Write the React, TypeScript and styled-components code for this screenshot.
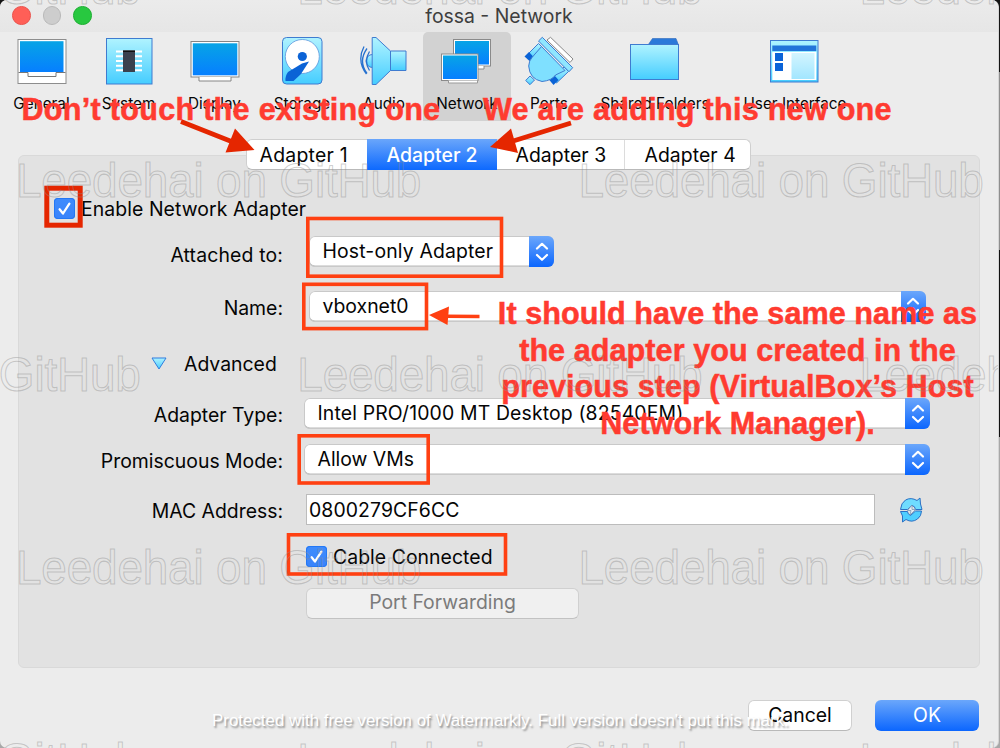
import React from "react";
import styled, { createGlobalStyle, css } from "styled-components";

const Global = createGlobalStyle`
  html, body { margin: 0; padding: 0; overflow: hidden; }
  body {
    width: 1000px; height: 748px;
    background: linear-gradient(#141414 0 72px, #8f8f8f 72px 250px, #111 250px 437px, #a8a8a8 437px);
    font-family: Inter, "Liberation Sans", sans-serif;
  }
`;

const Window = styled.main`
  position: relative;
  display: flex;
  flex-direction: column;
  box-sizing: border-box;
  width: 999px;
  height: 748px;
  overflow: hidden;
  background: #ececec;
  border-radius: 7px;
  border-right: 1px solid #d6d6d6;
  font-size: 19.4px;
  color: #050505;
  white-space: nowrap;
`;

const TitleBar = styled.header`
  position: relative;
  display: flex;
  align-items: center;
  justify-content: center;
  height: 32px;
  flex: none;
  box-sizing: border-box;
  background: linear-gradient(#ebebeb, #e6e6e6);
  color: #3e3e3e;
`;

const Lights = styled.div`
  position: absolute;
  left: 12px;
  top: 6px;
  display: flex;
  gap: 12px;
`;

const Light = styled.span<{ $fill: string; $edge: string }>`
  box-sizing: border-box;
  width: 18.7px;
  height: 18.7px;
  border-radius: 50%;
  background: ${(p) => p.$fill};
  border: 1px solid ${(p) => p.$edge};
`;

const Toolbar = styled.nav`
  display: flex;
  height: 89px;
  flex: none;
`;

const Tool = styled.div<{ $w: number; $gap?: number; $active?: boolean }>`
  display: flex;
  flex-direction: column;
  align-items: center;
  width: ${(p) => p.$w}px;
  margin-right: ${(p) => p.$gap ?? 0}px;
  box-sizing: border-box;
  padding-top: 4px;
  border-radius: 5px 5px 0 0;
  background: ${(p) => (p.$active ? "#d2d2d2" : "transparent")};
  font-size: 15.3px;
  line-height: 20px;
  svg { display: block; flex: none; margin-bottom: 6px; }
`;

const Body = styled.section`
  position: relative;
  box-sizing: border-box;
  height: 547px;
  flex: none;
  padding: 34px 18px 0;
`;

const Panel = styled.div`
  box-sizing: border-box;
  width: 962px;
  height: 513px;
  padding-top: 38px;
  border: 1px solid #d9d9d9;
  border-radius: 6px;
  background: #e2e2e2;
`;

const Tabs = styled.div`
  position: absolute;
  left: 246px;
  top: 18px;
  display: flex;
  width: 505px;
  height: 31px;
  box-sizing: border-box;
  border: 1px solid #cfcfcf;
  border-bottom-color: #b9b9b9;
  border-radius: 6px;
  background: #fff;
`;

const Tab = styled.div<{ $w: number; $pad: number; $active?: boolean; $line?: boolean; $space?: number }>`
  width: ${(p) => p.$w}px;
  box-sizing: border-box;
  padding-left: ${(p) => p.$pad}px;
  line-height: 30px;
  letter-spacing: ${(p) => p.$space ?? 0.25}px;
  ${(p) => p.$line && css`border-right: 1px solid #dcdcdc;`}
  ${(p) =>
    p.$active &&
    css`
      margin: -1px 0;
      line-height: 32px;
      color: #fff;
      font-weight: 500;
      background: linear-gradient(#6aa6fb, #0d69fe);
    `}
`;

const Row = styled.div<{ $gap?: number; $h?: number }>`
  display: flex;
  align-items: center;
  height: ${(p) => p.$h ?? 31}px;
  margin-top: ${(p) => p.$gap ?? 0}px;
`;

const Label = styled.label<{ $drop?: number; $space?: number }>`
  width: 264px;
  flex: none;
  text-align: right;
  line-height: 26px;
  letter-spacing: ${(p) => p.$space ?? 0}px;
  padding-top: ${(p) => p.$drop ?? 0}px;
`;

const Select = styled.div<{ $w: number; $x: number }>`
  display: flex;
  justify-content: space-between;
  box-sizing: border-box;
  width: ${(p) => p.$w}px;
  height: 31px;
  margin-left: ${(p) => p.$x}px;
  padding-left: 13.5px;
  border-radius: 6px;
  background: #fff;
  box-shadow: inset 0 0 0 1px #c9c9c9, inset 0 -1.5px 0 #b9b9b9;
  line-height: 31px;
`;

const Stepper = styled.span`
  display: flex;
  align-items: center;
  justify-content: center;
  width: 25px;
  height: 31px;
  border-radius: 0 6px 6px 0;
  background: linear-gradient(#6ba7fb, #0b66fe);
`;

const Spaced = styled.span<{ $s: number }>`
  letter-spacing: ${(p) => p.$s}px;
`;

const Check = styled.span<{ $x: number; $gap: number; $lift?: number }>`
  display: flex;
  width: 21px;
  height: 21px;
  margin-left: ${(p) => p.$x}px;
  margin-right: ${(p) => p.$gap}px;
  margin-bottom: ${(p) => p.$lift ?? 0}px;
  border-radius: 4px;
  background: linear-gradient(#3f8cfd, #3983fb);
  box-shadow: inset 0 0 0 1px #2478f5;
`;

const Advanced = styled.div`
  display: flex;
  align-items: center;
  gap: 17px;
  margin-left: 132px;
`;

const Field = styled.div`
  box-sizing: border-box;
  width: 569px;
  height: 31px;
  margin-left: 23px;
  margin-right: 24px;
  padding-left: 2px;
  border: 1px solid #bcbcbc;
  background: #fff;
  line-height: 30px;
  letter-spacing: 0.1px;
`;

const Button = styled.div<{ $w: number; $kind?: "primary" | "disabled" }>`
  display: flex;
  align-items: center;
  justify-content: center;
  box-sizing: border-box;
  width: ${(p) => p.$w}px;
  height: 31px;
  border-radius: 6px;
  background: #fff;
  border: 1px solid #d0d0d0;
  border-bottom-color: #b9b9b9;
  line-height: 27px;
  ${(p) =>
    p.$kind === "disabled" &&
    css`
      margin-left: 23px;
      padding-bottom: 2px;
      color: #7b7b7b;
      background: #f0f0f0;
      border-color: #d0d0d0;
      border-bottom-color: #c2c2c2;
    `}
  ${(p) =>
    p.$kind === "primary" &&
    css`
      color: #fff;
      border: 0;
      background: linear-gradient(#6ba7fb, #0b66fe);
    `}
`;

const Footer = styled.footer`
  display: flex;
  justify-content: flex-end;
  gap: 23px;
  padding: 32px 19px 0 0;
`;

const Overlay = styled.div`
  position: absolute;
  inset: 0;
  pointer-events: none;
`;

const Marks = styled.svg`
  position: absolute;
  left: 0;
  top: 0;
`;

const Note = styled.p<{ $x: number; $y: number; $w?: number; $s?: number }>`
  position: absolute;
  left: ${(p) => p.$x}px;
  top: ${(p) => p.$y}px;
  width: ${(p) => (p.$w ? p.$w + "px" : "auto")};
  margin: 0;
  text-align: center;
  white-space: pre;
  color: #ff3b30;
  font: bold 30.6px/36.7px "Liberation Sans", Arial, sans-serif;
  letter-spacing: ${(p) => p.$s ?? 0}px;
  -webkit-text-stroke: 0.5px #ff3b30;
`;

const Stamp = styled.span<{ $x: number; $base: number }>`
  position: absolute;
  left: ${(p) => p.$x}px;
  top: ${(p) => p.$base - 41.5}px;
  font: 45.9px/52px "Liberation Sans", Arial, sans-serif;
  letter-spacing: -0.17px;
  transform: scaleY(1.04);
  transform-origin: 0 42px;
  color: transparent;
  -webkit-text-stroke: 1px rgba(140, 140, 140, 0.42);
`;

const Notice = styled.p`
  position: absolute;
  left: 212px;
  top: 711px;
  margin: 0;
  color: #fff;
  font: 16.9px/20px "Liberation Sans", Arial, sans-serif;
  text-shadow: 1.5px 2px 2px rgba(0, 0, 0, 0.4);
`;

const Arrows = () => (
  <Stepper>
    <svg width="14" height="20" viewBox="0 0 14 20" fill="none" stroke="#fff" strokeWidth="2.2" strokeLinecap="round" strokeLinejoin="round">
      <path d="M2 6.5 L7 1.800 L12 6.5 M2 13 L7 17.800 L12 13" />
    </svg>
  </Stepper>
);

const Tick = () => (
  <svg width="21" height="21" viewBox="0 0 21 21" fill="none" stroke="#fff" strokeWidth="2.3" strokeLinecap="round" strokeLinejoin="round">
    <path d="M5.6 11.3 L9 15.5 L15.4 5.6" />
  </svg>
);

const Icon = ({ cx, children }: { cx: number; children: React.ReactNode }) => (
  <svg width="52" height="52" viewBox={`${cx - 26} 36 52 52`}>
    {children}
  </svg>
);

const SCREEN = "url(#screen)";
const ICE = "url(#ice)";
const EDGE = "#3f7bd0";

const tools = [
  { name: "General", w: 83, cx: 41.5, art: (
    <>
      <rect x="17.5" y="39.5" width="48" height="44" fill="#fff" stroke="#8d8d8d" />
      <path d="M18 72.5H27.5V76.5H55.5V72.5H65" fill="#fff" stroke="#777" />
      <rect x="19.5" y="41.2" width="43.5" height="30.8" fill={SCREEN} />
    </>
  ) },
  { name: "System", w: 91, cx: 129, art: (
    <>
      <rect x="106.5" y="38.5" width="45.5" height="45.5" fill={ICE} stroke={EDGE} />
      <path d="M116 51.5h26M116 56.2h26M116 61h26M116 65.7h26M116 70.3h26" stroke="#fff" strokeWidth="2" />
      <rect x="123" y="50.5" width="12" height="21.5" fill="#3a414e" />
      <rect x="123" y="50.5" width="12" height="1.5" fill="#111" />
    </>
  ) },
  { name: "Display", w: 81, cx: 214.5, art: (
    <>
      <rect x="190.5" y="41.5" width="48" height="35.5" fill="#fff" stroke="#858585" />
      <path d="M198.5 77v4h32v-4" fill="#fff" stroke="#858585" />
      <rect x="192.3" y="43.3" width="44.5" height="32" fill={SCREEN} />
    </>
  ) },
  { name: "Storage", w: 94, cx: 302, art: (
    <>
      <rect x="282.5" y="37.5" width="39.5" height="46.5" rx="4" fill={ICE} stroke={EDGE} />
      <circle cx="302.3" cy="56.5" r="17" fill="#fff" stroke="#5b96dc" strokeWidth="0.8" />
      <circle cx="302.3" cy="56.5" r="4.6" fill="#0b63d6" />
      <path d="M309 61.5 L302 63.5 L288 72 Q285 76 285.5 81 L293.5 81 L301 74 Z" fill="#0b63d6" />
    </>
  ) },
  { name: "Audio", w: 70, gap: 4, cx: 383.5, art: (
    <>
      <path d="M372 54.5a6.500 6.500 0 0 0 0 13" fill={ICE} stroke={EDGE} />
      <path d="M369 51.5q-6 9.500 0 19M366.500 48.500q-9 12.500 0 25M363.500 46.500q-7.500 14.500 2.500 27.500" fill="none" stroke="#2671cf" strokeWidth="1.3" />
      <path d="M390 51H405.500V70.500H390Z" fill={ICE} stroke={EDGE} />
      <path d="M371.700 37.500H375.500L390 51V70.500L375.500 84.500H371.700Z" fill={ICE} stroke={EDGE} />
    </>
  ) },
  { name: "Network", w: 88, active: true, cx: 467, art: (
    <>
      <rect x="453.500" y="39.500" width="37" height="26.500" fill="#fff" stroke="#8a8a8a" />
      <path d="M470 66v3h14v-3" fill="#fff" stroke="#8a8a8a" />
      <rect x="455" y="41" width="34" height="23.500" fill={SCREEN} />
      <rect x="441.500" y="54" width="36.500" height="26.500" fill="#fff" stroke="#8a8a8a" />
      <path d="M448.500 80.500v2.500h29v-2.500" fill="#fff" stroke="#999" />
      <rect x="443" y="55.500" width="34" height="23.500" fill={SCREEN} />
    </>
  ) },
  { name: "Ports", w: 76, cx: 549, art: (
    <g strokeLinejoin="round">
      <path d="M547 40L550.500 37.300L573 59L570 62.500Z" fill="#fff" stroke="#888" />
      <path d="M538.500 43.500L542.500 47.500L530 60L526 56Z" fill={ICE} stroke={EDGE} />
      <path d="M564 67L568.500 71.500L556.500 83L552 78.500Z" fill={ICE} stroke={EDGE} />
      <path d="M529 52L534 57.500L529.500 61L524.500 56.500Z" fill="#0b63d6" />
      <path d="M548.500 79L554.500 75.500L558.500 80L553.500 85Z" fill="#0b63d6" />
      <path d="M525.700 80.500L530 76L534.500 80L530 84.700Z" fill={ICE} stroke={EDGE} />
      <path d="M541.500 46.500L565 70.500L555.500 75Q552 80.500 542 81.500Q529.500 79 528.700 66Q529 60.500 532 57.500Z" fill="#7fe0ff" stroke={EDGE} />
      <path d="M538.500 41L542.300 37.300L572.700 67.700L569 71.700Z" fill="#8fe6ff" stroke={EDGE} />
    </g>
  ) },
  { name: "Shared Folders", w: 136, cx: 655, art: (
    <>
      <path d="M648 45L652.500 38.500H676L678.500 45Z" fill="#2b79d9" stroke="#2c68bb" strokeWidth="0.600" />
      <rect x="630.500" y="44.500" width="48" height="35" fill={ICE} stroke={EDGE} />
    </>
  ) },
  { name: "User Interface", w: 144, cx: 795, art: (
    <>
      <rect x="770.500" y="40.500" width="47.500" height="41.500" fill={ICE} stroke={EDGE} />
      <rect x="772.300" y="45.500" width="44" height="5.500" fill="#2274d9" />
      <rect x="772.300" y="52" width="44" height="28" fill="#fff" />
      <path d="M775 53h8v8h-8zM775 63h8v8h-8z" fill="#0a63d8" />
      <rect x="791.500" y="53" width="23" height="26" fill="url(#pane)" />
    </>
  ) },
];

const stamps: [number, number][] = [
  [-264.500, 3], [297.300, 3], [859.5, 3],
  [16, 196.500], [578.500, 196.500],
  [-264.500, 390], [297.300, 390], [859.500, 390],
  [16, 583], [578.500, 583],
  [-264.500, 776.500], [297.300, 776.500], [859.500, 776.500],
];

export default function App() {
  return (
    <>
      <Global />
      <Window>
        <TitleBar>
          <Lights>
            <Light $fill="#ff5f57" $edge="#e9544e" />
            <Light $fill="#cdcdcd" $edge="#b9b9b9" />
            <Light $fill="#28c840" $edge="#1fae34" />
          </Lights>
          fossa - Network
        </TitleBar>

        <Toolbar>
          {tools.map((t) => (
            <Tool key={t.name} $w={t.w} $gap={t.gap} $active={t.active}>
              <Icon cx={t.cx}>{t.art}</Icon>
              {t.name}
            </Tool>
          ))}
        </Toolbar>

        <Body>
          <Panel>
            <Row $h={30}>
              <Check $x={34.500} $gap={6.500} $lift={1}><Tick /></Check>
              <Spaced $s={0.080}>Enable Network Adapter</Spaced>
            </Row>
            <Row $gap={12}>
              <Label $drop={6} $space={0.15}>Attached to:</Label>
              <Select $x={26} $w={245}><Spaced $s={0.15}>Host-only Adapter</Spaced><Arrows /></Select>
            </Row>
            <Row $gap={24}>
              <Label $drop={3}>Name:</Label>
              <Select $x={26} $w={616.500}>vboxnet0<Arrows /></Select>
            </Row>
            <Row $gap={26}>
              <Advanced>
                <svg width="16" height="13" viewBox="0 0 16 13">
                  <path d="M1 1H15L8 12Z" fill={ICE} stroke="#2f7de0" strokeLinejoin="round" />
                </svg>
                Advanced
              </Advanced>
            </Row>
            <Row $gap={19}>
              <Label $drop={2}>Adapter Type:</Label>
              <Select $x={21} $w={626}><Spaced $s={0.15}>Intel PRO/1000 MT Desktop (82540EM)</Spaced><Arrows /></Select>
            </Row>
            <Row $gap={15}>
              <Label $drop={2}>Promiscuous Mode:</Label>
              <Select $x={21} $w={626}>Allow VMs<Arrows /></Select>
            </Row>
            <Row $gap={19}>
              <Label $drop={3}>MAC Address:</Label>
              <Field>0800279CF6CC</Field>
              <svg width="25" height="26" viewBox="0 0 25 26" fill="#6fdcff" stroke="#2c70c4" strokeWidth="1" strokeLinejoin="round">
                <path d="M1.500 12.500Q2 6 6.500 3Q12 0 18 3.500L21 1L21.500 7L23 12.500H16.500Q16 9 13 8.500L8.500 12.500Z" />
                <path d="M1.500 14.500H8.500Q8.500 17 11.500 18.500L16.500 14H22.500Q22.500 19 18.500 22Q13 26 7 22.500L3.500 25L3.500 19Z" fill="#4fcfff" />
                <path d="M13 8L8.500 13.500H12L11 18L16.500 12.500H13Z" fill="#e8eef5" stroke="#6f8fae" strokeWidth="0.700" />
              </svg>
            </Row>
            <Row $gap={21} $h={21}>
              <Check $x={286.500} $gap={6.500}><Tick /></Check>
              <Spaced $s={0.050}>Cable Connected</Spaced>
            </Row>
            <Row $gap={21}>
              <Label />
              <Button $w={273} $kind="disabled">Port Forwarding</Button>
            </Row>
          </Panel>
          <Tabs>
            <Tab $w={120} $pad={12.500}>Adapter 1</Tab>
            <Tab $w={130} $pad={19.500} $space={0} $active>Adapter 2</Tab>
            <Tab $w={128} $pad={18.500} $line $space={0.050}>Adapter 3</Tab>
            <Tab $w={125} $pad={19.500} $space={0.050}>Adapter 4</Tab>
          </Tabs>
        </Body>

        <Footer>
          <Button $w={104}>Cancel</Button>
          <Button $w={104} $kind="primary">OK</Button>
        </Footer>

        <Overlay>
          <Note $x={21.500} $y={91} $s={0.270}>Don’t touch the existing one</Note>
          <Note $x={483} $y={91} $s={0.250}>We are adding this new one</Note>
          <Note $x={487.500} $y={295} $w={500} $s={0.050}>
            {"It should have the same name as\nthe adapter you created in the\nprevious step (VirtualBox’s Host\nNetwork Manager)."}
          </Note>
          <Marks width="1000" height="748" viewBox="0 0 1000 748" fill="none">
            <defs>
              <linearGradient id="screen" x1="0" y1="0" x2="0" y2="1">
                <stop offset="0" stopColor="#07a4e6" />
                <stop offset="1" stopColor="#067fff" />
              </linearGradient>
              <linearGradient id="ice" x1="0" y1="0" x2="0" y2="1">
                <stop offset="0" stopColor="#b0f3ff" />
                <stop offset="1" stopColor="#45cdff" />
              </linearGradient>
              <linearGradient id="pane" x1="0" y1="0" x2="0" y2="1">
                <stop offset="0" stopColor="#d3f5ff" />
                <stop offset="1" stopColor="#a2e6ff" />
              </linearGradient>
            </defs>
            <g stroke="#e52600" fill="#e52600">
              <rect x="46.800" y="188.200" width="33.400" height="37" strokeWidth="5" fill="none" />
              <path d="M181 121.500L234 142.500M571 123L510 142" strokeWidth="4.600" />
              <path d="M254.500 150L235 128.500L225.500 152.500ZM490 147L511 128.500L518 153Z" stroke="none" />
            </g>
            <g stroke="#ff4012" strokeWidth="3.600">
              <rect x="307.800" y="218.500" width="193.700" height="57.700" />
              <rect x="303.800" y="284.300" width="122.700" height="44.300" />
              <rect x="299.200" y="435.800" width="129" height="47.200" />
              <rect x="288.500" y="534.800" width="217" height="39.200" />
              <path d="M479.500 316.500L446 316.200" />
              <path d="M429 315L449 306.500L447.500 325Z" fill="#ff4012" stroke="none" />
            </g>
          </Marks>
          {stamps.map(([x, y]) => (
            <Stamp key={`${x}/${y}`} $x={x} $base={y}>Leedehai on GitHub</Stamp>
          ))}
          <Notice>Protected with free version of Watermarkly. Full version doesn't put this mark.</Notice>
        </Overlay>
      </Window>
    </>
  );
}
